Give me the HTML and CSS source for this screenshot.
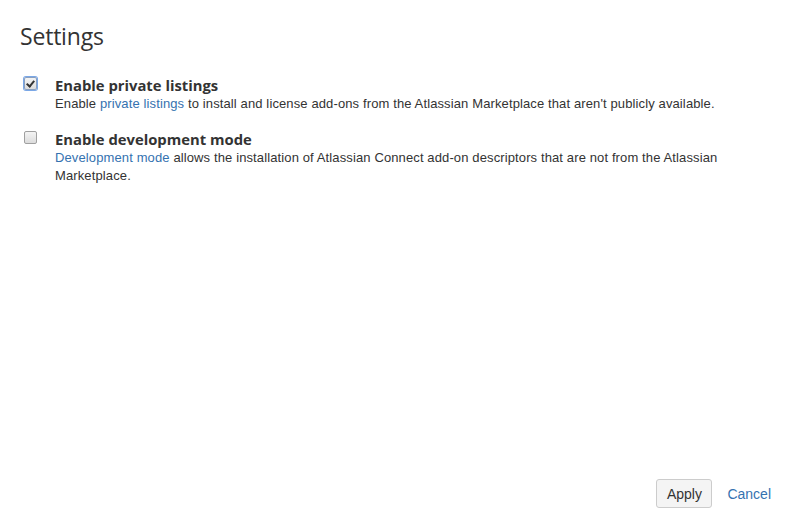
FILE: index.html
```html
<!DOCTYPE html>
<html lang="en">
<head>
<meta charset="utf-8">
<title>Settings</title>
<link rel="stylesheet" href="styles.css">
</head>
<body>
<div class="page">
  <h2 class="title">Settings</h2>
  <div class="options">
    <div class="option">
      <span class="check-col"><input type="checkbox" class="box box-focus" id="opt-private" checked></span>
      <div class="text">
        <label class="label" for="opt-private">Enable private listings</label>
        <div class="desc">Enable <a href="#">private listings</a> to install and license add-ons from the Atlassian Marketplace that aren't publicly available.</div>
      </div>
    </div>
    <div class="option">
      <span class="check-col"><input type="checkbox" class="box" id="opt-dev"></span>
      <div class="text">
        <label class="label" for="opt-dev">Enable development mode</label>
        <div class="desc"><a href="#">Development mode</a> allows the installation of Atlassian Connect add-on descriptors that are not from the Atlassian Marketplace.</div>
      </div>
    </div>
  </div>
  <div class="actions">
    <button class="btn" type="button">Apply</button>
    <a class="cancel" href="#">Cancel</a>
  </div>
</div>
</body>
</html>
```

FILE: styles.css
```css
html, body {
  margin: 0;
  padding: 0;
  background: #fff;
}
body {
  font-family: Arial, "Liberation Sans", sans-serif;
  color: #333;
}
.page {
  box-sizing: border-box;
  height: 528px;
  padding: 21px 20px 20px 20px;
  display: flex;
  flex-direction: column;
}
.title {
  margin: 0;
  font-family: "Open Sans", sans-serif;
  font-weight: 400;
  font-size: 23px;
  line-height: 30px;
  color: #333;
  letter-spacing: -0.2px;
}
.options {
  margin-top: 24px;
  display: flex;
  flex-direction: column;
  gap: 16px;
}
.option {
  display: flex;
}
.check-col {
  width: 35px;
  flex: none;
  padding-left: 4px;
  box-sizing: border-box;
}
.box {
  -webkit-appearance: none;
  appearance: none;
  margin: 2px 0 0 0;
  width: 13px;
  height: 13px;
  box-sizing: border-box;
  border: 1px solid #a0a0a0;
  border-radius: 2px;
  background: linear-gradient(#f4f4f4, #dcdcdc);
  position: relative;
  display: block;
}
.box-focus {
  box-shadow: 0 0 0 1px #7aa7e6;
  border-color: #8aa0c0;
}
.box:checked::after {
  content: "";
  position: absolute;
  left: 3px;
  top: 1px;
  width: 3px;
  height: 6px;
  border: solid #333;
  border-width: 0 2px 2px 0;
  transform: rotate(40deg);
}
.text {
  flex: 1;
}
.label {
  display: block;
  font-family: "Open Sans", sans-serif;
  font-weight: 700;
  font-size: 14.8px;
  line-height: 20px;
  color: #333;
}
.desc {
  font-size: 13px;
  letter-spacing: 0.12px;
  line-height: 18px;
  color: #333;
}
a {
  color: #3572b0;
  text-decoration: none;
}
.actions {
  margin-top: auto;
  display: flex;
  justify-content: flex-end;
  align-items: center;
  gap: 15px;
}
.btn {
  font-family: Arial, "Liberation Sans", sans-serif;
  font-size: 14px;
  color: #333;
  background: #f4f4f4;
  border: 1px solid #ccc;
  border-radius: 3px;
  height: 29px;
  width: 56px;
  padding: 0;
  margin-bottom: 0;
}
.cancel {
  font-size: 14px;
  line-height: 20px;
}
```
